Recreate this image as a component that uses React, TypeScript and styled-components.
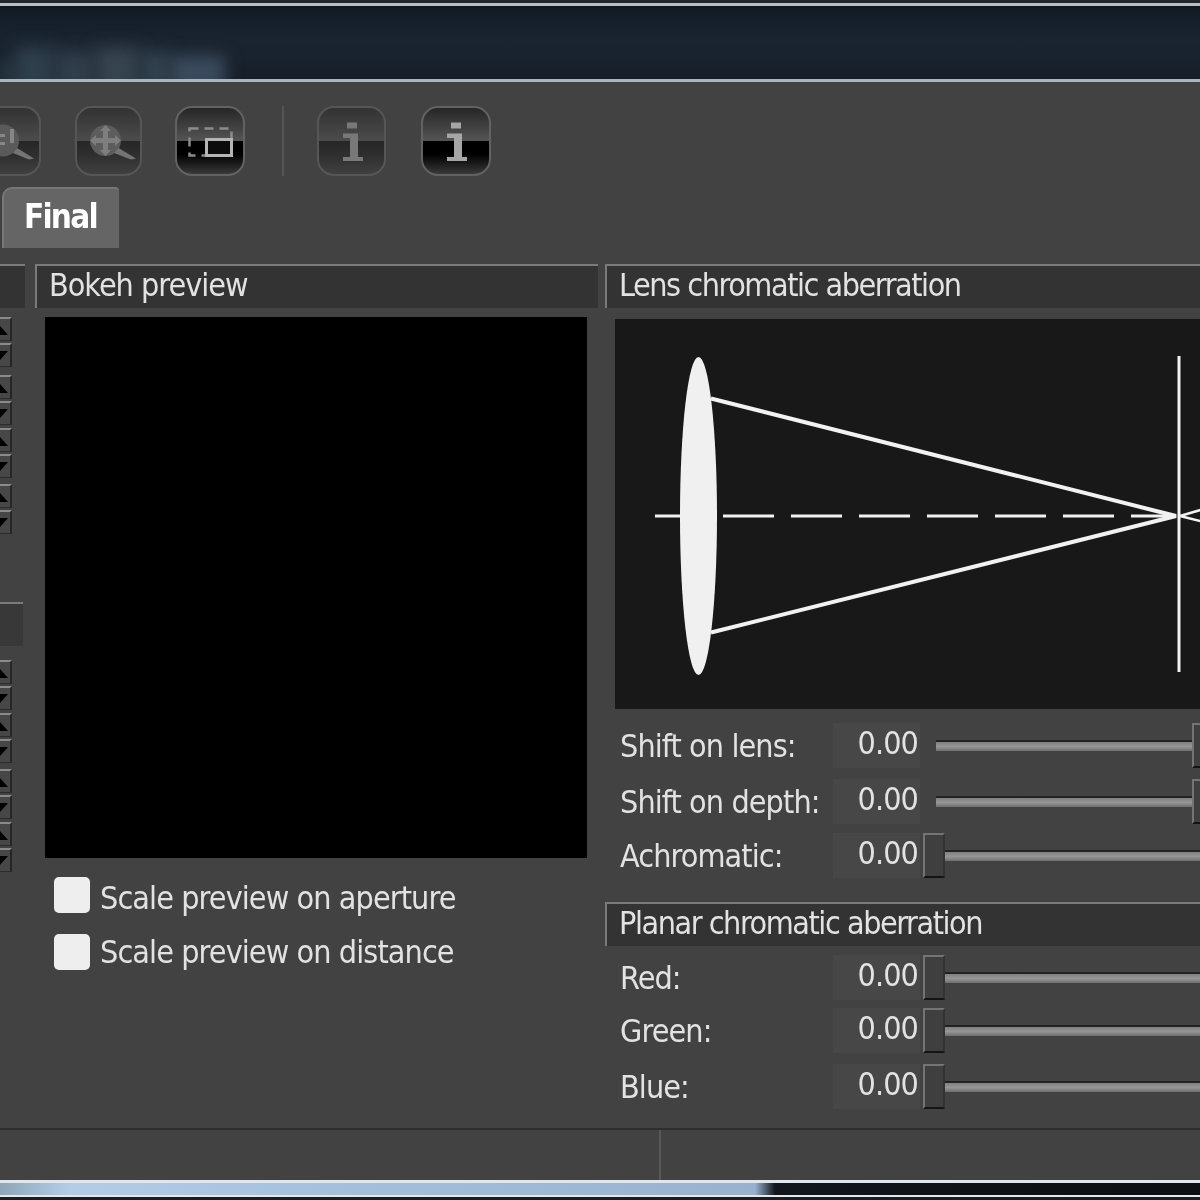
import styled, { createGlobalStyle } from "styled-components";

const GlobalStyle = createGlobalStyle`
    html, body {
        margin: 0;
        padding: 0;
        background: #424242;
    }
`;

const Window = styled.div`
    width: 1200px;
    height: 1200px;
    overflow: hidden;
    display: flex;
    flex-direction: column;
    background: #424242;
    color: #e2e2e2;
    font-family: "DejaVu Sans", sans-serif;
    font-stretch: condensed;
    font-size: 32px;
    letter-spacing: -0.9px;
    filter: blur(0.7px);
`;

const TopEdge = styled.div`
    height: 8px;
    flex: none;
    background: linear-gradient(#20262c 0 3px, #b9bdc1 3px 6px, #10161e 6px);
`;

const TitleBar = styled.div`
    height: 71px;
    flex: none;
    display: flex;
    align-items: flex-end;
    overflow: hidden;
    background: linear-gradient(#121b25, #1a2430 45%, #161f29);
    border-bottom: 3px solid #aeb5ba;
`;

const TitleGlow = styled.div<{ $width: number; $height: number; $color: string }>`
    width: ${({ $width }) => $width}px;
    height: ${({ $height }) => $height}px;
    flex: none;
    margin-bottom: -14px;
    background: ${({ $color }) => $color};
    filter: blur(8px);
`;

const Toolbar = styled.div`
    height: 70px;
    flex: none;
    margin: 24px 0 11px -27px;
    display: flex;
    align-items: stretch;
`;

const ToolButton = styled.div<{ $active?: boolean; $left: number; $width: number }>`
    width: ${({ $width }) => $width}px;
    margin-left: ${({ $left }) => $left}px;
    flex: none;
    box-sizing: border-box;
    border-radius: 17px;
    border: 2px solid ${({ $active }) => ($active ? "#626262" : "#565656")};
    display: flex;
    align-items: center;
    justify-content: center;
    background: ${({ $active }) =>
        $active
            ? "linear-gradient(#262626, #555 50%, #000 50%, #000 70%, #3a3a3a)"
            : "linear-gradient(#323232, #4c4c4c 50%, #262626 50%, #2e2e2e 70%, #404040)"};
`;

const ToolSeparator = styled.div`
    width: 2px;
    margin-left: 37px;
    flex: none;
    background: #545454;
`;

const TabRow = styled.div`
    height: 61px;
    flex: none;
    padding-left: 2px;
    display: flex;
    margin-bottom: 16px;
`;

const Tab = styled.div`
    width: 117px;
    box-sizing: border-box;
    padding: 0 0 5px 20px;
    display: flex;
    align-items: center;
    background: #656565;
    border-top: 2px solid #777;
    border-left: 2px solid #777;
    border-radius: 10px 4px 0 0;
    color: #fff;
    font-weight: 700;
    font-size: 33px;
    letter-spacing: -1.8px;
`;

const Main = styled.div`
    flex: 1;
    min-height: 0;
    display: flex;
`;

const StubColumn = styled.div`
    width: 25px;
    flex: none;
    display: flex;
    flex-direction: column;
    margin-right: 10px;
`;

const SectionHeader = styled.div<{ $top?: number; $tight?: boolean }>`
    height: 44px;
    flex: none;
    box-sizing: border-box;
    margin-top: ${({ $top }) => $top ?? 0}px;
    padding: 0 0 4px 12px;
    display: flex;
    align-items: center;
    background: #333;
    border-top: 2px solid #7a7a7a;
    border-left: 2px solid #7a7a7a;
    white-space: nowrap;
    letter-spacing: ${({ $tight }) => ($tight ? "-1.45px" : "-1px")};
`;

const StubHeader = styled.div<{ $top?: number; $flat?: boolean }>`
    height: 44px;
    width: ${({ $flat }) => ($flat ? 23 : 25)}px;
    flex: none;
    box-sizing: border-box;
    margin-top: ${({ $top }) => $top ?? 0}px;
    background: ${({ $flat }) => ($flat ? "#383838" : "#333")};
    border-top: 2px solid #7a7a7a;
`;

const SpinPair = styled.div<{ $top: number }>`
    margin-top: ${({ $top }) => $top}px;
    width: 12px;
    display: flex;
    flex-direction: column;
    gap: 2px;
    overflow: hidden;
`;

const SpinButton = styled.div<{ $down?: boolean }>`
    width: 24px;
    height: 24px;
    margin-left: -12px;
    box-sizing: border-box;
    background: #474747;
    border-top: 2px solid #8a8a8a;
    border-right: 2px solid #262626;
    border-bottom: 1px solid #2c2c2c;
    display: flex;
    align-items: center;
    justify-content: center;

    &::after {
        content: "";
        border-left: 9px solid transparent;
        border-right: 9px solid transparent;
        ${({ $down }) =>
            $down ? "border-top: 10px solid #000;" : "border-bottom: 10px solid #000;"}
    }
`;

const PreviewColumn = styled.div`
    width: 563px;
    flex: none;
    display: flex;
    flex-direction: column;
    margin-right: 7px;
`;

const PreviewBox = styled.div`
    width: 542px;
    height: 541px;
    margin: 9px 0 19px 10px;
    background: #000;
`;

const CheckRow = styled.label<{ $gap?: number }>`
    display: flex;
    align-items: center;
    gap: 10px;
    height: 36px;
    margin: 0 0 ${({ $gap }) => $gap ?? 0}px 19px;
    white-space: nowrap;
`;

const CheckBox = styled.span`
    width: 36px;
    height: 36px;
    flex: none;
    border-radius: 5px;
    background: #eeeeee;
`;

const CheckText = styled.span<{ $drop?: number }>`
    padding-top: ${({ $drop }) => $drop ?? 0}px;
`;

const LensColumn = styled.div`
    width: 640px;
    flex: none;
    display: flex;
    flex-direction: column;
`;

const LensCanvas = styled.div`
    height: 390px;
    margin: 11px 0 14px 10px;
    background: #181818;
    overflow: hidden;
    svg {
        display: block;
    }
`;

const SliderRow = styled.div<{ $top?: number }>`
    height: 45px;
    flex: none;
    margin-top: ${({ $top }) => $top ?? 0}px;
    display: flex;
    align-items: stretch;
`;

const RowLabel = styled.div`
    width: 213px;
    padding-left: 15px;
    box-sizing: content-box;
    flex: none;
    display: flex;
    align-items: center;
    white-space: nowrap;
`;

const ValueBox = styled.div`
    width: 87px;
    flex: none;
    box-sizing: border-box;
    padding: 0 2px 6px 0;
    display: flex;
    align-items: center;
    justify-content: flex-end;
    background: #474747;
`;

const Slider = styled.div`
    flex: 1;
    position: relative;
    margin-left: 16px;
    display: flex;
    align-items: center;
`;

const SliderTrack = styled.div`
    flex: 1;
    height: 11px;
    box-sizing: border-box;
    border-top: 2px solid #222;
    background: linear-gradient(#808080, #969696 50%, #6e6e6e);
`;

const SliderHandle = styled.div<{ $end?: boolean }>`
    position: absolute;
    top: 0;
    bottom: 0;
    left: ${({ $end }) => ($end ? "256px" : "-13px")};
    width: 22px;
    box-sizing: border-box;
    background: #3f3f3f;
    border-top: 2px solid #747474;
    border-left: 2px solid #747474;
    border-bottom: 2px solid #141414;
    border-right: 2px solid #333;
`;

const StatusBar = styled.div`
    height: 52px;
    flex: none;
    box-sizing: border-box;
    border-top: 2px solid #2e2e2e;
    display: flex;
`;

const StatusCell = styled.div`
    width: 661px;
    flex: none;
    box-sizing: border-box;
    border-right: 2px solid #585858;
`;

const BottomEdge = styled.div`
    height: 20px;
    flex: none;
    background:
        linear-gradient(#dfe6ec 0 3px, transparent 3px 15px, #e4e8ec 15px 17px, #1a1d22 17px),
        linear-gradient(90deg, #8fa6b8, #b4cde6 70px, #a4bfdc 350px, #98b2ce 755px, #11161c 775px, #0b0e12);
`;

const ZoomOneIcon = () => (
    <svg width="60" height="60" viewBox="0 0 60 60" fill="none">
        <circle cx="26" cy="29.5" r="16" fill="#5a5a5a" />
        <path d="M33 18 H37 V32 H33 Z M15 23 H28 V26 H15 Z M15 31 H28 V34 H15 Z" fill="#868686" />
        <path d="M40 37 L57 47.5 L52 48.5 L36 42 Z" fill="#747474" />
    </svg>
);

const ZoomFitIcon = () => (
    <svg width="60" height="60" viewBox="0 0 60 60" fill="none">
        <circle cx="26.5" cy="29.5" r="15.5" fill="#5c5c5c" />
        <path
            d="M26.5 14 L32 20 H29 V27 H36 V24 L42 29.5 L36 35 V32 H29 V39 H32 L26.5 45 L21 39 H24 V32 H17 V35 L11 29.5 L17 24 V27 H24 V20 H21 Z"
            fill="#7e7e7e"
        />
        <path d="M39.5 37 L57 47.5 L52 48.5 L35 42 Z" fill="#747474" />
    </svg>
);

const FrameIcon = () => (
    <svg width="56" height="50" viewBox="0 0 56 50" fill="none">
        <rect x="7.5" y="12.5" width="42" height="27" stroke="#8c8c8c" strokeWidth="2.5" strokeDasharray="9 6" />
        <rect x="24.5" y="23.5" width="25" height="16" stroke="#b4b4b4" strokeWidth="3" fill="#0c0c0c" />
    </svg>
);

const InfoIcon = ({ light }: { light?: boolean }) => (
    <svg width="30" height="46" viewBox="0 0 30 46">
        <g fill={light ? "#a6a6a6" : "#787878"}>
            <rect x="10" y="4.5" width="10" height="6" />
            <path d="M6 15.5 H21 V39 H26 V43 H6 V39 H13 V20 H6 Z" />
        </g>
    </svg>
);

const LensDiagram = () => (
    <svg width="630" height="390" viewBox="615 319 630 390">
        <line x1="655" y1="516" x2="1170" y2="516" stroke="#f2f2f2" strokeWidth="3" strokeDasharray="51 17" />
        <ellipse cx="698.5" cy="516" rx="18.5" ry="159" fill="#f0f0f0" />
        <path d="M711 398.5 L1176 516 L711 632.5" fill="none" stroke="#f2f2f2" strokeWidth="4" />
        <path d="M1180 516 L1204 509 M1180 516 L1204 522" fill="none" stroke="#f2f2f2" strokeWidth="2.5" />
        <line x1="1179" y1="356" x2="1179" y2="672" stroke="#f2f2f2" strokeWidth="3" />
    </svg>
);

const titleGlows = [
    { width: 15, height: 34, color: "#293a46" },
    { width: 40, height: 46, color: "#2f3f4c" },
    { width: 40, height: 42, color: "#303e4b" },
    { width: 45, height: 46, color: "#36444f" },
    { width: 30, height: 42, color: "#32424f" },
    { width: 55, height: 38, color: "#3a4a5c" },
];

const spinGroups = [
    [9, 8, 3, 6],
    [14, 3, 6, 3],
];

const SpinGroup = ({ tops }: { tops: number[] }) => (
    <>
        {tops.map((top, i) => (
            <SpinPair key={i} $top={top}>
                <SpinButton />
                <SpinButton $down />
            </SpinPair>
        ))}
    </>
);

const lensRows = [
    { label: "Shift on lens:", top: 0, end: true },
    { label: "Shift on depth:", top: 11, end: true },
    { label: "Achromatic:", top: 9, end: false },
];

const planarRows = [
    { label: "Red:", top: 9 },
    { label: "Green:", top: 8 },
    { label: "Blue:", top: 11 },
];

const App = () => {
    return (
        <>
            <GlobalStyle />
            <Window>
                <TopEdge />
                <TitleBar>
                    {titleGlows.map((glow, i) => (
                        <TitleGlow key={i} $width={glow.width} $height={glow.height} $color={glow.color} />
                    ))}
                </TitleBar>

                <Toolbar>
                    <ToolButton $left={0} $width={68}>
                        <ZoomOneIcon />
                    </ToolButton>
                    <ToolButton $left={34} $width={67}>
                        <ZoomFitIcon />
                    </ToolButton>
                    <ToolButton $left={33} $width={70} $active>
                        <FrameIcon />
                    </ToolButton>
                    <ToolSeparator />
                    <ToolButton $left={33} $width={69}>
                        <InfoIcon />
                    </ToolButton>
                    <ToolButton $left={35} $width={70} $active>
                        <InfoIcon light />
                    </ToolButton>
                </Toolbar>

                <TabRow>
                    <Tab>Final</Tab>
                </TabRow>

                <Main>
                    <StubColumn>
                        <StubHeader />
                        <SpinGroup tops={spinGroups[0]} />
                        <StubHeader $flat $top={68} />
                        <SpinGroup tops={spinGroups[1]} />
                    </StubColumn>

                    <PreviewColumn>
                        <SectionHeader>Bokeh preview</SectionHeader>
                        <PreviewBox />
                        <CheckRow $gap={21}>
                            <CheckBox />
                            <CheckText $drop={6}>Scale preview on aperture</CheckText>
                        </CheckRow>
                        <CheckRow>
                            <CheckBox />
                            <CheckText>Scale preview on distance</CheckText>
                        </CheckRow>
                    </PreviewColumn>

                    <LensColumn>
                        <SectionHeader $tight>Lens chromatic aberration</SectionHeader>
                        <LensCanvas>
                            <LensDiagram />
                        </LensCanvas>
                        {lensRows.map((row) => (
                            <SliderRow key={row.label} $top={row.top}>
                                <RowLabel>{row.label}</RowLabel>
                                <ValueBox>0.00</ValueBox>
                                <Slider>
                                    <SliderTrack />
                                    <SliderHandle $end={row.end} />
                                </Slider>
                            </SliderRow>
                        ))}
                        <SectionHeader $top={24} $tight>
                            Planar chromatic aberration
                        </SectionHeader>
                        {planarRows.map((row) => (
                            <SliderRow key={row.label} $top={row.top}>
                                <RowLabel>{row.label}</RowLabel>
                                <ValueBox>0.00</ValueBox>
                                <Slider>
                                    <SliderTrack />
                                    <SliderHandle />
                                </Slider>
                            </SliderRow>
                        ))}
                    </LensColumn>
                </Main>

                <StatusBar>
                    <StatusCell />
                </StatusBar>
                <BottomEdge />
            </Window>
        </>
    );
};

export default App;
